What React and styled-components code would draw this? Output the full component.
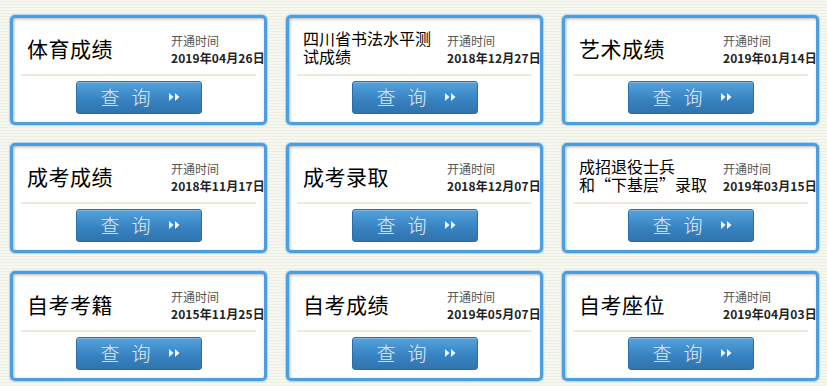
import React from "react";
import styled, { createGlobalStyle } from "styled-components";

const GlobalStyle = createGlobalStyle`
    body {
        margin: 0;
        background-color: #f7f7f1;
        background-image: repeating-linear-gradient(
            0deg,
            rgba(220, 220, 200, 0.35) 0px,
            rgba(220, 220, 200, 0.35) 1px,
            transparent 1px,
            transparent 3px
        );
        font-family: "Noto Sans CJK SC", "Noto Sans", sans-serif;
    }
`;

const Grid = styled.div`
    display: grid;
    grid-template-columns: repeat(3, 257px);
    grid-auto-rows: 110px;
    column-gap: 19px;
    row-gap: 18px;
    padding: 15px 0 0 10px;
    width: 827px;
    height: 386px;
    box-sizing: border-box;
`;

const Card = styled.div`
    box-sizing: border-box;
    border: 3px solid #4b9ee0;
    border-radius: 5px;
    background: #fff;
    box-shadow: inset 1px 1px 3px rgba(0, 0, 0, 0.3), 0 0 1px 1px rgba(120, 180, 235, 0.5);
    display: flex;
    flex-direction: column;
    padding: 0 8px 8px 8px;
`;

const Top = styled.div`
    height: 56px;
    display: flex;
    align-items: center;
    padding-left: 6px;
    border-bottom: 2px solid #efebdc;
`;

const Title = styled.div`
    width: ${(p) => (p.$small ? "140px" : "144px")};
    margin-right: ${(p) => (p.$small ? "4px" : "0")};
    flex-shrink: 0;
    color: #000;
    white-space: pre-line;
    font-size: ${(p) => (p.$small ? "16px" : "21px")};
    line-height: ${(p) => (p.$small ? "18px" : "26px")};
    margin-top: ${(p) => (p.$small ? "2px" : "4px")};
    letter-spacing: ${(p) => (p.$small ? "0" : "0.5px")};
`;

const Info = styled.div`
    display: flex;
    flex-direction: column;
    white-space: nowrap;
    font-size: 12px;
    line-height: 17px;
    margin-top: 5px;
`;

const Label = styled.span`
    color: #555;
`;

const Date = styled.span`
    color: #222;
    font-weight: bold;
    letter-spacing: 0.1px;
`;

const ButtonRow = styled.div`
    flex: 1;
    display: flex;
    justify-content: center;
    align-items: flex-end;
`;

const QueryButton = styled.button`
    width: 126px;
    height: 33px;
    margin-left: 1px;
    border: 1px solid #2b6da6;
    border-radius: 3px;
    background: linear-gradient(#55a3dc, #3983c2 55%, #2f74ae);
    color: #e2eef8;
    font-family: "Noto Sans CJK SC", sans-serif;
    font-size: 19px;
    font-weight: 300;
    letter-spacing: 12px;
    display: flex;
    align-items: center;
    justify-content: center;
    padding: 0 0 2px 2px;
    cursor: pointer;
    box-shadow: inset 0 1px 0 rgba(255, 255, 255, 0.25);
`;

const Arrows = () => (
    <svg width="11" height="8" viewBox="0 0 11 8" style={{ marginLeft: 6 }}>
        <polygon points="0,0 4.5,4 0,8" fill="#f2f8fd" />
        <polygon points="6,0 10.5,4 6,8" fill="#f2f8fd" />
    </svg>
);

const items = [
    { title: "体育成绩", date: "2019年04月26日" },
    { title: "四川省书法水平测试成绩", date: "2018年12月27日", small: true },
    { title: "艺术成绩", date: "2019年01月14日" },
    { title: "成考成绩", date: "2018年11月17日" },
    { title: "成考录取", date: "2018年12月07日" },
    { title: "成招退役士兵\n和“下基层”录取", date: "2019年03月15日", small: true },
    { title: "自考考籍", date: "2015年11月25日" },
    { title: "自考成绩", date: "2019年05月07日" },
    { title: "自考座位", date: "2019年04月03日" },
];

const App = () => (
    <>
        <GlobalStyle />
        <Grid>
            {items.map((item, i) => (
                <Card key={i}>
                    <Top>
                        <Title $small={item.small}>{item.title}</Title>
                        <Info>
                            <Label>开通时间</Label>
                            <Date>{item.date}</Date>
                        </Info>
                    </Top>
                    <ButtonRow>
                        <QueryButton>
                            查询
                            <Arrows />
                        </QueryButton>
                    </ButtonRow>
                </Card>
            ))}
        </Grid>
    </>
);

export default App;
